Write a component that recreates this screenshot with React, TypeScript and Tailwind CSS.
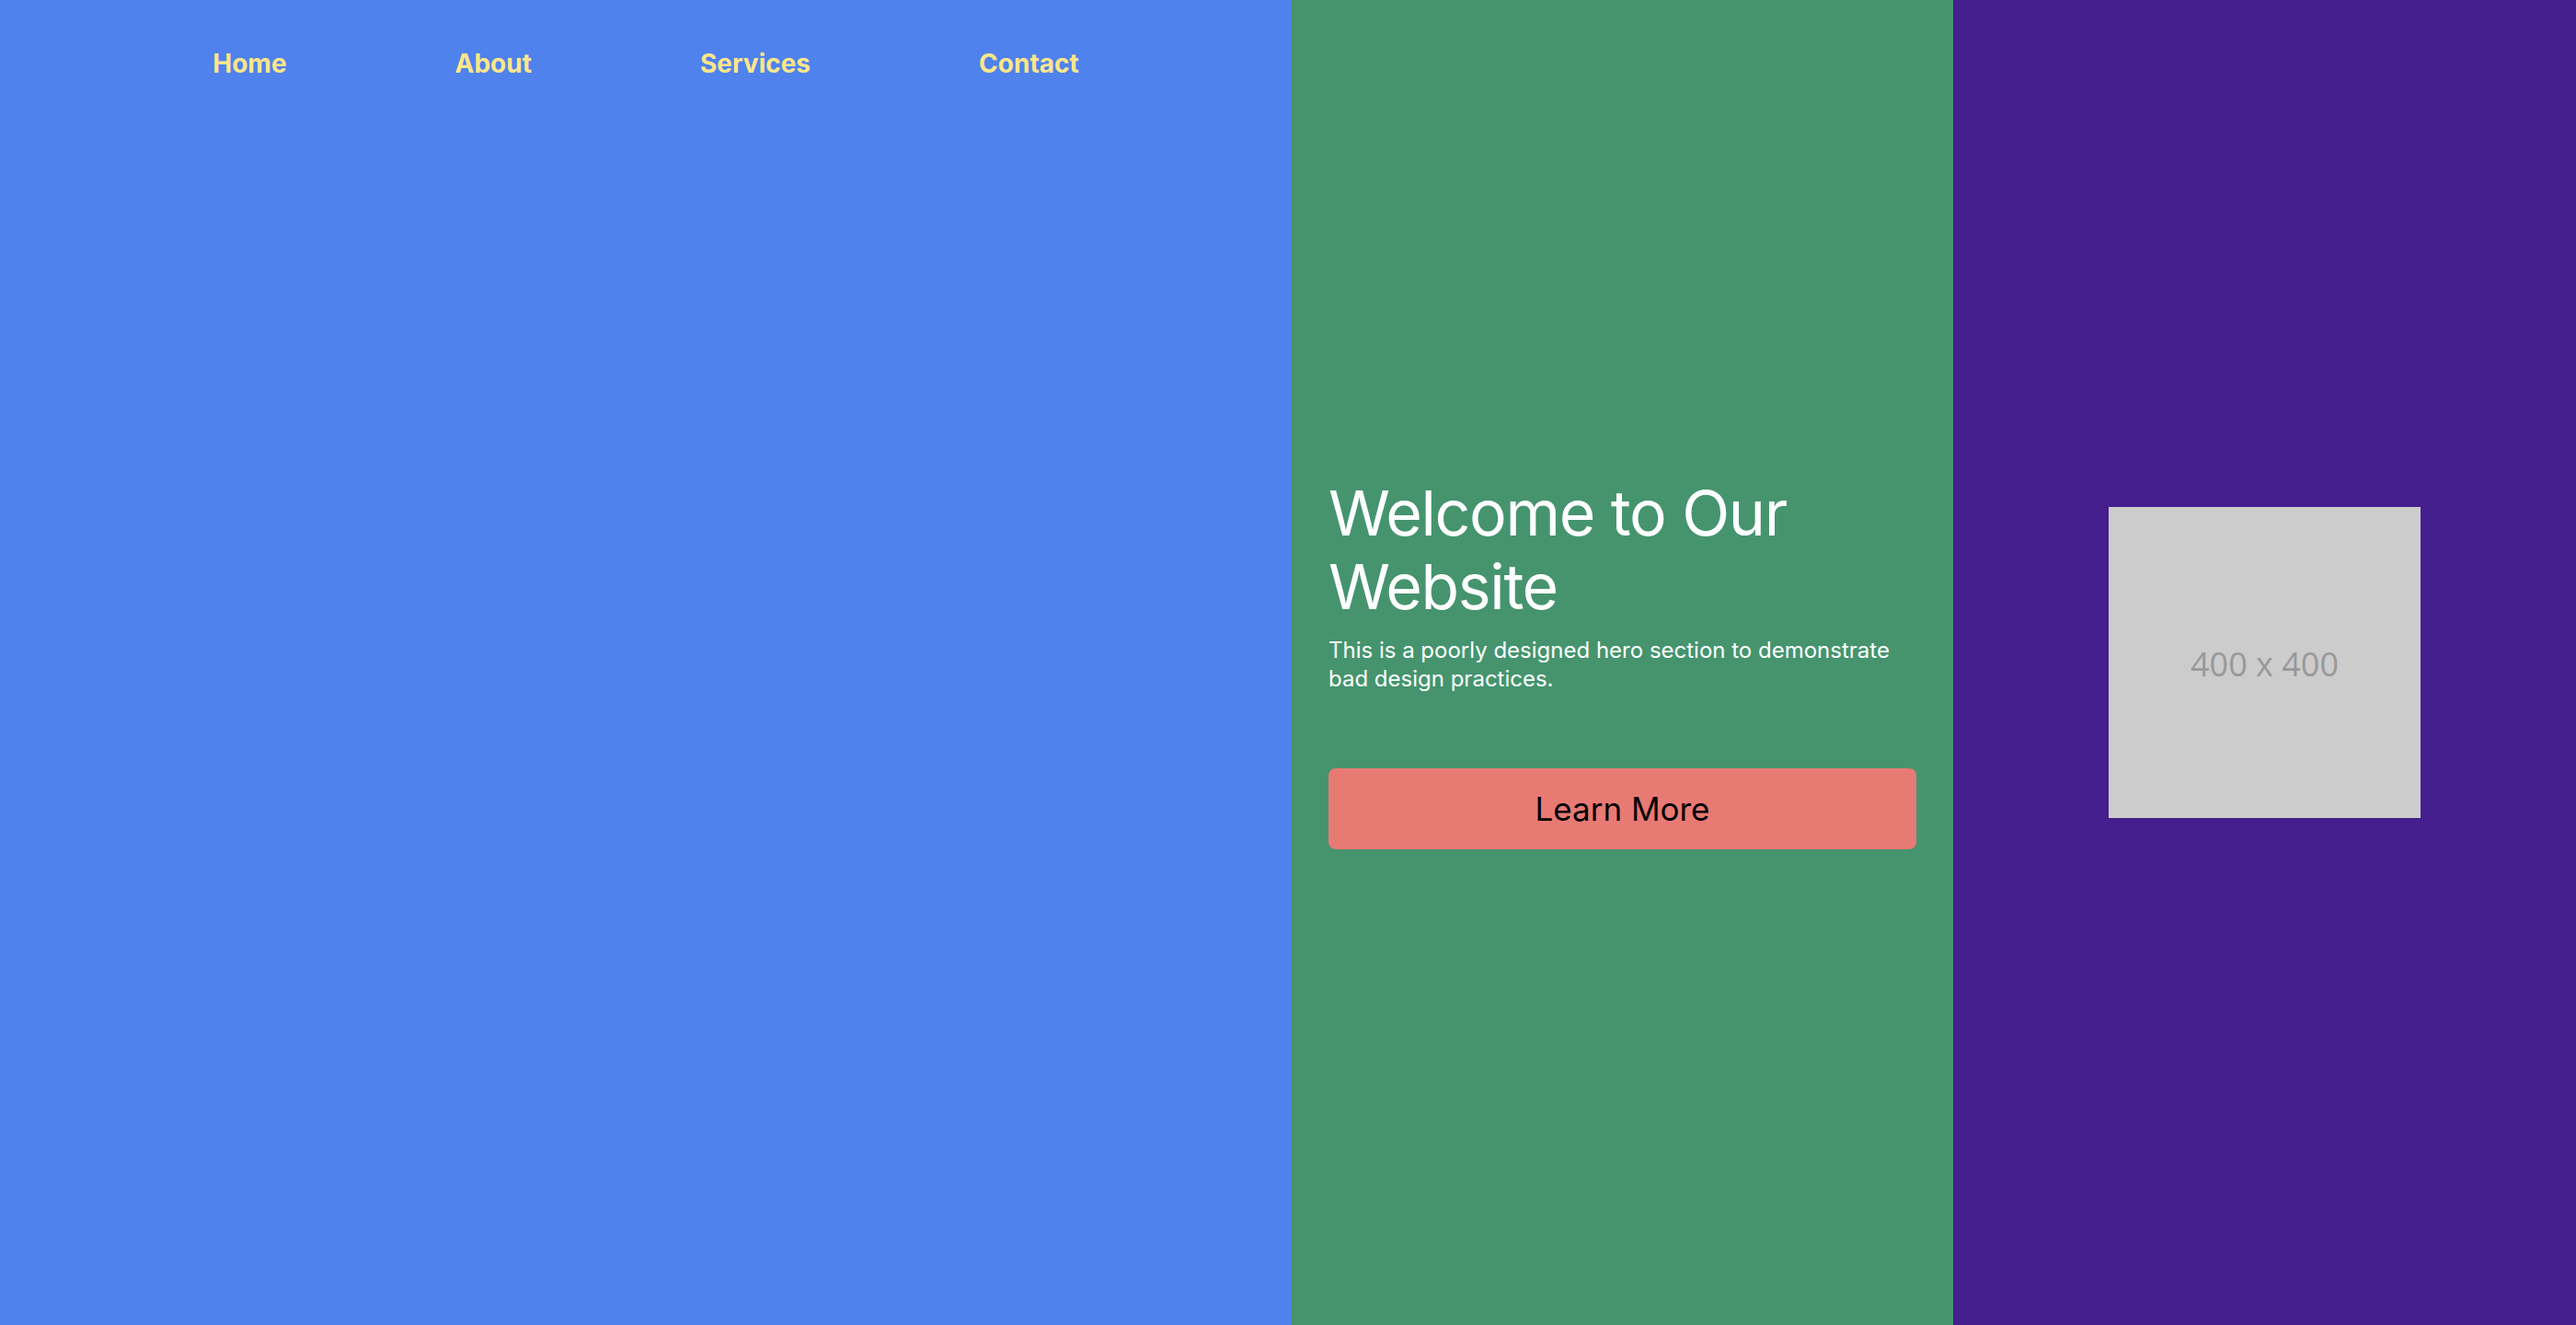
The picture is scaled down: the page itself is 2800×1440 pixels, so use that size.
const navLinks = ['Home', 'About', 'Services', 'Contact'];

const App = () => {
  return (
    <div className="flex h-[1440px] w-[2800px] font-['Inter',sans-serif]">
      <section className="flex h-full w-[1404px] shrink-0 flex-col bg-[#4f82ec]">
        <nav className="flex justify-center gap-[183px] pt-[52px]">
          {navLinks.map((link) => (
            <a key={link} href="#" className="text-[28px] font-bold leading-[34px] text-[#fde68a]">
              {link}
            </a>
          ))}
        </nav>
      </section>
      <section className="flex h-full w-[719px] shrink-0 flex-col justify-center bg-[#45946e] px-[40px]">
        <h1 className="text-[68px] font-normal leading-[80px] tracking-[-0.02em] text-white">Welcome to Our Website</h1>
        <p className="mt-[14px] text-[24px] leading-[31px] text-white">
          This is a poorly designed hero section to demonstrate bad design practices.
        </p>
        <button
          type="button"
          className="mt-[82px] h-[88px] w-full rounded-lg bg-[#e87a74] text-[35px] text-black"
        >
          Learn More
        </button>
      </section>
      <section className="flex h-full flex-1 items-center justify-center bg-[#461f8e]">
        <div className="flex aspect-square w-1/2 items-center justify-center bg-[#cccccc] pt-[4px] font-['Open_Sans',sans-serif] text-[36px] text-[#999999]">
          400 x 400
        </div>
      </section>
    </div>
  );
};

export default App;
